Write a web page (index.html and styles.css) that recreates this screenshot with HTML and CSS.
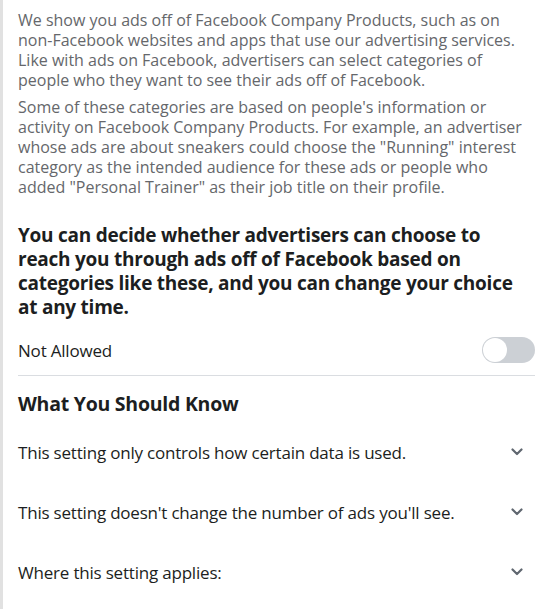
FILE: index.html
```html
<!DOCTYPE html>
<html>
<head>
<meta charset="utf-8">
<link rel="stylesheet" href="styles.css">
</head>
<body>
<div class="panel">
  <p class="desc">We show you ads off of Facebook Company Products, such as on non-Facebook websites and apps that use our advertising services. Like with ads on Facebook, advertisers can select categories of people who they want to see their ads off of Facebook.</p>
  <p class="desc second">Some of these categories are based on people's information or activity on Facebook Company Products. For example, an advertiser whose ads are about sneakers could choose the "Running" interest category as the intended audience for these ads or people who added "Personal Trainer" as their job title on their profile.</p>
  <h2 class="lead">You can decide whether advertisers can choose to reach you through ads off of Facebook based on categories like these, and you can change your choice at any time.</h2>
  <div class="setting">
    <span class="setting-label">Not Allowed</span>
    <span class="toggle"><span class="knob"></span></span>
  </div>
  <h3 class="know">What You Should Know</h3>
  <div class="items">
    <div class="item"><span>This setting only controls how certain data is used.</span><svg class="chev" width="12" height="8" viewBox="0 0 12 8"><path d="M1.5 1.5 L6 6 L10.5 1.5" fill="none" stroke="#606770" stroke-width="2.2" stroke-linecap="round" stroke-linejoin="round"/></svg></div>
    <div class="item"><span>This setting doesn't change the number of ads you'll see.</span><svg class="chev" width="12" height="8" viewBox="0 0 12 8"><path d="M1.5 1.5 L6 6 L10.5 1.5" fill="none" stroke="#606770" stroke-width="2.2" stroke-linecap="round" stroke-linejoin="round"/></svg></div>
    <div class="item"><span>Where this setting applies:</span><svg class="chev" width="12" height="8" viewBox="0 0 12 8"><path d="M1.5 1.5 L6 6 L10.5 1.5" fill="none" stroke="#606770" stroke-width="2.2" stroke-linecap="round" stroke-linejoin="round"/></svg></div>
  </div>
</div>
</body>
</html>
```

FILE: styles.css
```css
html, body {
  margin: 0;
  padding: 0;
  background: #ffffff;
}
body {
  font-family: "Open Sans", "Noto Sans", sans-serif;
  width: 547px;
  height: 609px;
  overflow: hidden;
}
.panel {
  border-left: 3px solid #e1e1e1;
  padding: 10px 12px 0 15px;
  min-height: 609px;
  box-sizing: border-box;
}
.desc {
  margin: 0;
  font-size: 16px;
  line-height: 20px;
  color: #65676b;
}
.desc.second {
  margin-top: 7px;
}
.lead {
  margin: 26px 0 0 0;
  font-size: 19px;
  line-height: 24px;
  font-weight: 700;
  color: #1c1e21;
  letter-spacing: -0.25px;
}
.setting {
  display: flex;
  align-items: center;
  justify-content: space-between;
  height: 50px;
  border-bottom: 1px solid #dadde1;
  margin-top: 6px;
}
.setting-label {
  font-size: 17px;
  color: #1c1e21;
  letter-spacing: -0.2px;
}
.toggle {
  width: 53px;
  height: 26px;
  border-radius: 13px;
  background: #ccd0d5;
  display: flex;
  align-items: center;
}
.knob {
  width: 24px;
  height: 24px;
  border-radius: 50%;
  background: #fff;
  margin-left: 1px;
}
.know {
  margin: 15px 0 0 0;
  font-size: 19.5px;
  line-height: 26px;
  font-weight: 700;
  color: #1c1e21;
  letter-spacing: -0.25px;
}
.items {
  margin-top: 5px;
}
.item {
  display: flex;
  align-items: center;
  justify-content: space-between;
  height: 60px;
  font-size: 17px;
  color: #1c1e21;
  letter-spacing: -0.2px;
  padding-right: 12px;
}
```
